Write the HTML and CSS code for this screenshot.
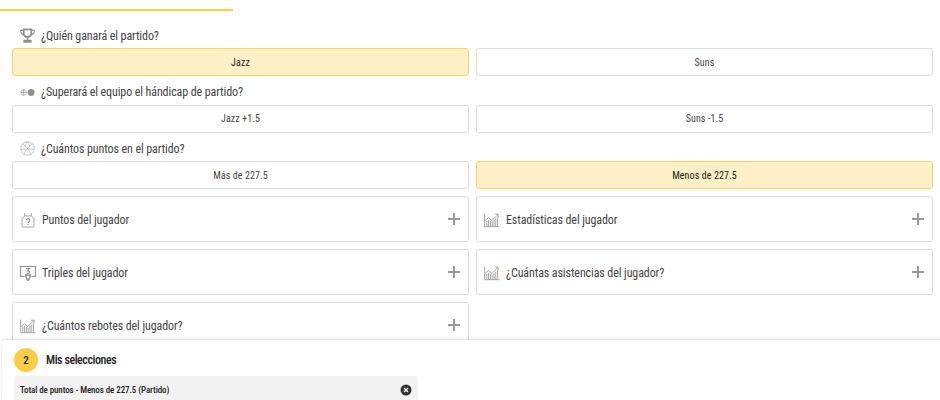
FILE: index.html
```html
<!DOCTYPE html>
<html lang="es">
<head>
    <meta charset="UTF-8">
    <title>Apuestas</title>
    <link rel="stylesheet" href="styles.css">
</head>
<body>
    <div class="tab-line"></div>

    <main class="markets">
        <!-- Quick markets -->
        <section class="market">
            <h2 class="market-title">
                <svg class="title-icon" viewBox="0 0 16 16"><path class="thick" d="M4 1.500h8v4.200c0 2.300-1.700 3.800-4 3.800S4 8 4 5.700z"/><path class="mid" d="M4 2.500H.7c0 2.900 1.200 4.600 4 5M12 2.500h3.300c0 2.900-1.200 4.600-4 5"/><path class="thick" d="M8 9.500v3.500M4.500 14.800h7v-1.500h-7z"/></svg>
                ¿Quién ganará el partido?
            </h2>
            <div class="options">
                <button class="option selected">Jazz</button>
                <button class="option">Suns</button>
            </div>
        </section>

        <section class="market">
            <h2 class="market-title">
                <svg class="title-icon" viewBox="0 0 16 16"><circle cx="3.800" cy="8" r="3"/><path d="M.8 8h6M3.800 5v6"/><circle class="solid" cx="11.800" cy="8" r="3.400"/></svg>
                ¿Superará el equipo el hándicap de partido?
            </h2>
            <div class="options">
                <button class="option">Jazz +1.5</button>
                <button class="option">Suns -1.5</button>
            </div>
        </section>

        <section class="market">
            <h2 class="market-title">
                <svg class="title-icon light" viewBox="0 0 16 16"><circle cx="8" cy="8" r="7.200"/><path d="M2.800 3c3 1.800 7.300 6.500 8.800 11.300M13.200 3c-3 1.800-7.300 6.500-8.800 11.300M1 9.500c3.500-1.600 10.500-1.600 14 0M8 .8C6.500 2.300 5.800 3.800 5.700 5.800M8 .8c1.500 1.500 2.200 3 2.300 5"/></svg>
                ¿Cuántos puntos en el partido?
            </h2>
            <div class="options">
                <button class="option">Más de 227.5</button>
                <button class="option selected">Menos de 227.5</button>
            </div>
        </section>

        <!-- Player markets -->
        <div class="accordions">
            <div class="accordion">
                <svg class="row-icon" viewBox="0 0 16 16"><path d="M4.600 1v2.400c0 1-.9 2.200-2.600 3v7.800c0 .5.300.8.800.8h10.400c.5 0 .8-.3.800-.8V6.400c-1.700-.8-2.600-2-2.600-3V1M4.600 3.500c1 .8 5.800.8 6.800 0"/><path class="mid" d="M6.300 8.300c0-2.200 3.500-2.200 3.500-.1 0 1.300-1.700 1.400-1.700 2.700M8.100 11.800v1.200"/></svg>
                <span class="accordion-name">Puntos del jugador</span>
                <span class="plus"></span>
            </div>
            <div class="accordion">
                <svg class="row-icon" viewBox="0 0 16 16"><use href="#chart"/></svg>
                <span class="accordion-name">Estadísticas del jugador</span>
                <span class="plus"></span>
            </div>
            <div class="accordion">
                <svg class="row-icon" viewBox="0 0 16 16"><path class="mid" d="M4.500 11.500H.6V1.500h14.800v10h-3.900"/><path class="mid" d="M6 3.600h3.600L7.700 5.900c1.500 0 2 .6 2 1.400 0 1.200-2.200 1.400-3.200.5"/><path class="thick" d="M5.500 10h5l-1 3.500-1.500 2-1.500-2z"/></svg>
                <span class="accordion-name">Triples del jugador</span>
                <span class="plus"></span>
            </div>
            <div class="accordion">
                <svg class="row-icon" viewBox="0 0 16 16"><use href="#chart"/></svg>
                <span class="accordion-name">¿Cuántas asistencias del jugador?</span>
                <span class="plus"></span>
            </div>
            <div class="accordion">
                <svg class="row-icon" viewBox="0 0 16 16"><use href="#chart"/></svg>
                <span class="accordion-name">¿Cuántos rebotes del jugador?</span>
                <span class="plus"></span>
            </div>
        </div>
    </main>

    <!-- Betslip, stays over the list -->
    <aside class="betslip">
        <div class="betslip-head">
            <span class="betslip-count">2</span>
            <span class="betslip-title">Mis selecciones</span>
        </div>
        <div class="selection">
            <span>Total de puntos - Menos de 227.5 (Partido)</span>
            <svg class="selection-close" viewBox="0 0 12 12"><circle cx="6" cy="6" r="5.500"/><path d="M4 4l4 4M8 4l-4 4"/></svg>
        </div>
    </aside>

    <svg class="icon-defs" width="0" height="0">
        <symbol id="chart" viewBox="0 0 16 16">
            <path d="M.6 1.500v13.200h14.800"/>
            <path d="M1 8.500l3.500-2.800 3.300 2.800 6-5.800M11.200 2.200h2.900v2.900"/>
            <path d="M2.800 14.500V9M4.600 14.500V7.800M6.400 14.500V9M8.200 14.500V9.500M10 14.500V8M11.800 14.500V6.500M13.600 14.500V5"/>
        </symbol>
    </svg>
</body>
</html>
```

FILE: styles.css
```css
html, body {
    height: 100%;
}
body {
    margin: 0;
    overflow: hidden;
    background-color: #fff;
    color: #333;
    font-family: Roboto, "Liberation Sans", sans-serif;
    font-stretch: 75%;
}
.tab-line {
    width: 233px;
    height: 2px;
    margin-top: 9px;
    background-color: #f9d04f;
}
.markets {
    padding: 14px 7px 0 12px;
}
.market-title {
    display: flex;
    align-items: center;
    height: 21px;
    margin: 0 0 2px;
    padding-left: 8px;
    font-size: 12px;
    font-weight: 400;
    letter-spacing: -0.1px;
    color: #444;
}
.title-icon {
    width: 15px;
    height: 15px;
    margin-right: 6px;
    fill: none;
    stroke: #8f8f8f;
    stroke-width: 0.7;
}
.title-icon.light {
    stroke: #a8a8a8;
}
.title-icon .thick {
    stroke-width: 1.800;
}
.title-icon .mid {
    stroke-width: 1.200;
}
.title-icon .solid {
    fill: #8f8f8f;
}
.market {
    margin-bottom: 5.500px;
}
.options {
    display: grid;
    grid-template-columns: 1fr 1fr;
    gap: 7px;
}
.option {
    height: 28px;
    padding: 0;
    border: 1px solid #ddd;
    border-radius: 3px;
    background-color: #fff;
    color: #444;
    font-family: inherit;
    font-stretch: inherit;
    font-size: 10px;
    letter-spacing: 0.1px;
}
.option.selected {
    border-color: #f9d568;
    background-color: #fdf0c6;
    color: #222;
}
.accordions {
    display: grid;
    grid-template-columns: 1fr 1fr;
    gap: 7px;
    margin-top: 7px;
}
.accordion {
    display: flex;
    align-items: center;
    height: 46px;
    padding: 0 8px 0 7px;
    box-sizing: border-box;
    border: 1px solid #ddd;
    border-radius: 3px;
}
.row-icon {
    width: 16px;
    height: 16px;
    margin: 1px 6px 0 0;
    fill: none;
    stroke: #8f8f8f;
    stroke-width: 0.8;
}
.row-icon .thick {
    stroke-width: 1.500;
}
.row-icon .mid {
    stroke-width: 1.100;
}
.accordion-name {
    flex: 1;
    padding-top: 1px;
    font-size: 12px;
    letter-spacing: -0.1px;
    color: #444;
}
.plus {
    position: relative;
    width: 12px;
    height: 12px;
}
.plus::before, .plus::after {
    content: "";
    position: absolute;
    background-color: #999;
}
.plus::before {
    left: 0;
    right: 0;
    top: 5px;
    height: 2px;
}
.plus::after {
    top: 0;
    bottom: 0;
    left: 5px;
    width: 2px;
}
.betslip {
    position: absolute;
    left: 2px;
    right: 0;
    top: 340px;
    height: 60px;
    padding: 8px 0 0 12px;
    box-sizing: border-box;
    overflow: hidden;
    background-color: #fff;
    border-top-left-radius: 3px;
    box-shadow: 0 -1px 3px rgba(0, 0, 0, 0.15);
}
.betslip-head {
    display: flex;
    align-items: center;
    gap: 8px;
    height: 24px;
}
.betslip-count {
    display: flex;
    align-items: center;
    justify-content: center;
    width: 24px;
    height: 24px;
    border-radius: 50%;
    background-color: #f9cd45;
    color: #222;
    font-size: 11px;
    font-weight: 500;
}
.betslip-title {
    font-size: 12px;
    font-weight: 500;
    letter-spacing: -0.45px;
    color: #222;
}
.selection {
    display: flex;
    align-items: center;
    justify-content: space-between;
    width: 404px;
    height: 28px;
    margin-top: 4px;
    padding: 0 6px;
    box-sizing: border-box;
    border-radius: 3px 3px 0 0;
    background-color: #f2f2f2;
    color: #222;
    font-size: 9px;
    font-weight: 500;
    letter-spacing: -0.1px;
}
.selection-close {
    width: 12px;
    height: 12px;
    fill: #333;
    stroke: #fff;
    stroke-width: 1.300;
}
.selection-close circle {
    stroke: none;
}
.icon-defs {
    position: absolute;
}
```
